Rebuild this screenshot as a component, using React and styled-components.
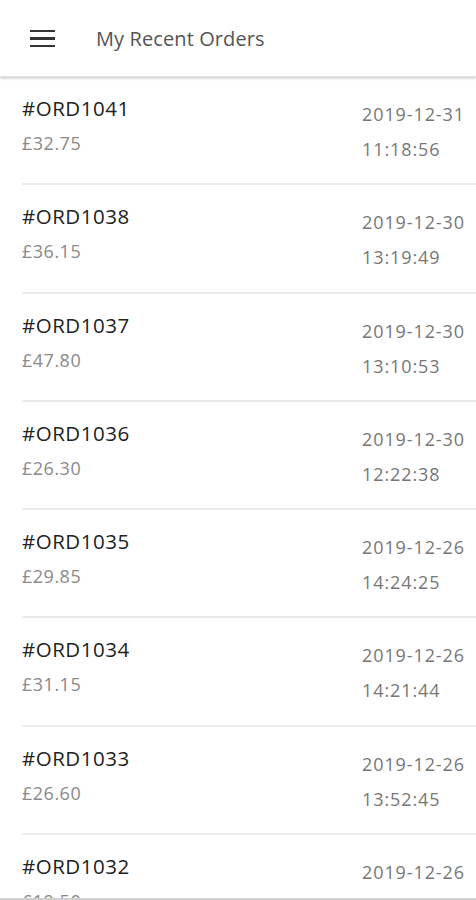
import React from 'react';
import styled, { createGlobalStyle } from 'styled-components';

const GlobalStyle = createGlobalStyle`
  html, body {
    margin: 0;
    padding: 0;
    background: #ffffff;
  }
  body {
    font-family: "Open Sans", "Liberation Sans", sans-serif;
  }
`;

const Screen = styled.div`
  width: 476px;
  height: 900px;
  display: flex;
  flex-direction: column;
  overflow: hidden;
  background: #fff;
  box-sizing: border-box;
  border-bottom: 2px solid #cfcfcf;
`;

const Header = styled.div`
  height: 76px;
  flex-shrink: 0;
  display: flex;
  align-items: center;
  padding-left: 30px;
  box-shadow: 0 1px 3px rgba(0, 0, 0, 0.25);
  border-bottom: 1px solid #e2e2e2;
  position: relative;
  z-index: 1;
`;

const MenuButton = styled.div`
  width: 25px;
  display: flex;
  flex-direction: column;
  gap: 5px;
  margin-top: 1px;
  span {
    display: block;
    height: 2.4px;
    background: #333;
  }
`;

const Title = styled.div`
  margin-left: 41px;
  font-size: 20px;
  color: #555;
  letter-spacing: 0.1px;
`;

const List = styled.div`
  flex: 1;
  overflow: hidden;
  padding-left: 22px;
`;

const Row = styled.div`
  height: 106.3px;
  display: flex;
  justify-content: space-between;
  border-bottom: 2px solid #ebebeb;
`;

const Left = styled.div`
  display: flex;
  flex-direction: column;
  padding-top: 18px;
`;

const OrderId = styled.div`
  font-size: 20.5px;
  line-height: 26px;
  letter-spacing: 0.5px;
  color: #222;
`;

const Amount = styled.div`
  font-size: 18px;
  line-height: 26px;
  margin-top: 9px;
  letter-spacing: 0.5px;
  color: #8a8a8a;
`;

const Right = styled.div`
  width: 114px;
  display: flex;
  flex-direction: column;
  padding-top: 20px;
`;

const Stamp = styled.div`
  font-size: 18px;
  line-height: 35px;
  letter-spacing: 0.9px;
  color: #777;
`;

const orders = [
  ['#ORD1041', '£32.75', '2019-12-31', '11:18:56'],
  ['#ORD1038', '£36.15', '2019-12-30', '13:19:49'],
  ['#ORD1037', '£47.80', '2019-12-30', '13:10:53'],
  ['#ORD1036', '£26.30', '2019-12-30', '12:22:38'],
  ['#ORD1035', '£29.85', '2019-12-26', '14:24:25'],
  ['#ORD1034', '£31.15', '2019-12-26', '14:21:44'],
  ['#ORD1033', '£26.60', '2019-12-26', '13:52:45'],
  ['#ORD1032', '£19.50', '2019-12-26', '13:40:12'],
];

export default function App() {
  return (
    <>
      <GlobalStyle />
      <Screen>
        <Header>
          <MenuButton>
            <span />
            <span />
            <span />
          </MenuButton>
          <Title>My Recent Orders</Title>
        </Header>
        <List>
          {orders.map(([id, amount, date, time]) => (
            <Row key={id}>
              <Left>
                <OrderId>{id}</OrderId>
                <Amount>{amount}</Amount>
              </Left>
              <Right>
                <Stamp>{date}</Stamp>
                <Stamp>{time}</Stamp>
              </Right>
            </Row>
          ))}
        </List>
      </Screen>
    </>
  );
}
